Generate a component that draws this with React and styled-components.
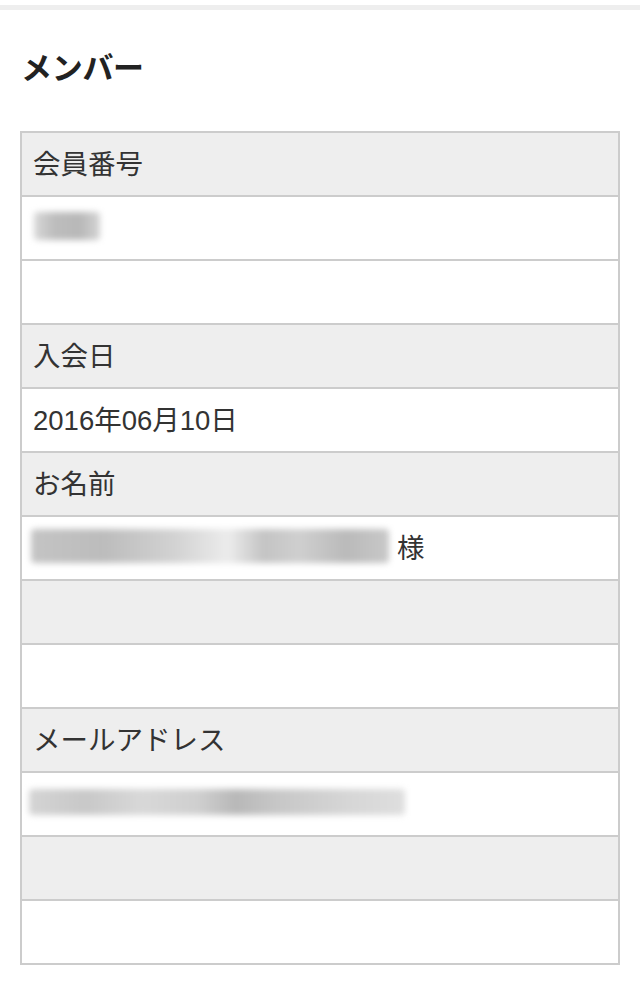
import React from 'react';
import styled, { createGlobalStyle } from 'styled-components';

const GlobalStyle = createGlobalStyle`
  html, body {
    margin: 0;
    padding: 0;
    background: #fff;
  }
  body {
    font-family: "Liberation Sans", "Noto Sans CJK JP", sans-serif;
    color: #333;
  }
`

const Page = styled.div`
  width: 640px;
  min-height: 1008px;
  padding-top: 5px;
  box-sizing: border-box;
`

const TopBar = styled.div`
  height: 5px;
  background-color: #eeeeee;
`

const Title = styled.h2`
  margin: 0;
  padding: 0 0 3px 21px;
  height: 118px;
  line-height: 118px;
  font-size: 31px;
  font-weight: 700;
  color: #222;
  letter-spacing: -0.3px;
`

const Table = styled.div`
  margin: 0 20px;
  border: 2px solid #cccccc;
  display: flex;
  flex-direction: column;
`

const Row = styled.div`
  box-sizing: border-box;
  height: ${p => (p.first ? 62 : 64)}px;
  display: flex;
  align-items: center;
  padding: 0 11px 4px;
  font-size: 27.5px;
  color: #333;
  background-color: ${p => (p.head ? '#eeeeee' : '#ffffff')};
  border-top: ${p => (p.first ? 'none' : '2px solid #cccccc')};
`

const Blur = styled.div`
  height: ${p => p.h || 28}px;
  width: ${p => p.w}px;
  margin-left: ${p => p.ml || 0}px;
  background: ${p => p.bg};
  filter: blur(3px);
  border-radius: 4px;
`

const Suffix = styled.span`
  margin-left: 8px;
`

export default function App() {
  return (
    <Page>
      <GlobalStyle />
      <TopBar />
      <Title>メンバー</Title>
      <Table>
        <Row head first>会員番号</Row>
        <Row>
          <Blur w={66} ml={1} bg="linear-gradient(90deg,#d8d8d8 0%,#bdbdbd 30%,#b8b8b8 70%,#d4d4d4 100%)" />
        </Row>
        <Row />
        <Row head>入会日</Row>
        <Row>2016年06月10日</Row>
        <Row head>お名前</Row>
        <Row>
          <Blur w={358} ml={-2} h={34} bg="linear-gradient(90deg,#c4c4c4 0%,#bcbcbc 20%,#d2d2d2 40%,#ececec 55%,#c4c4c4 65%,#cfcfcf 75%,#bababa 88%,#c8c8c8 100%)" />
          <Suffix>様</Suffix>
        </Row>
        <Row head />
        <Row />
        <Row head>メールアドレス</Row>
        <Row>
          <Blur w={376} ml={-4} h={26} bg="linear-gradient(90deg,#d4d4d4 0%,#c8c8c8 15%,#d8d8d8 30%,#cfcfcf 45%,#b8b8b8 55%,#c6c6c6 65%,#d6d6d6 85%,#dedede 100%)" />
        </Row>
        <Row head />
        <Row />
      </Table>
    </Page>
  );
}
